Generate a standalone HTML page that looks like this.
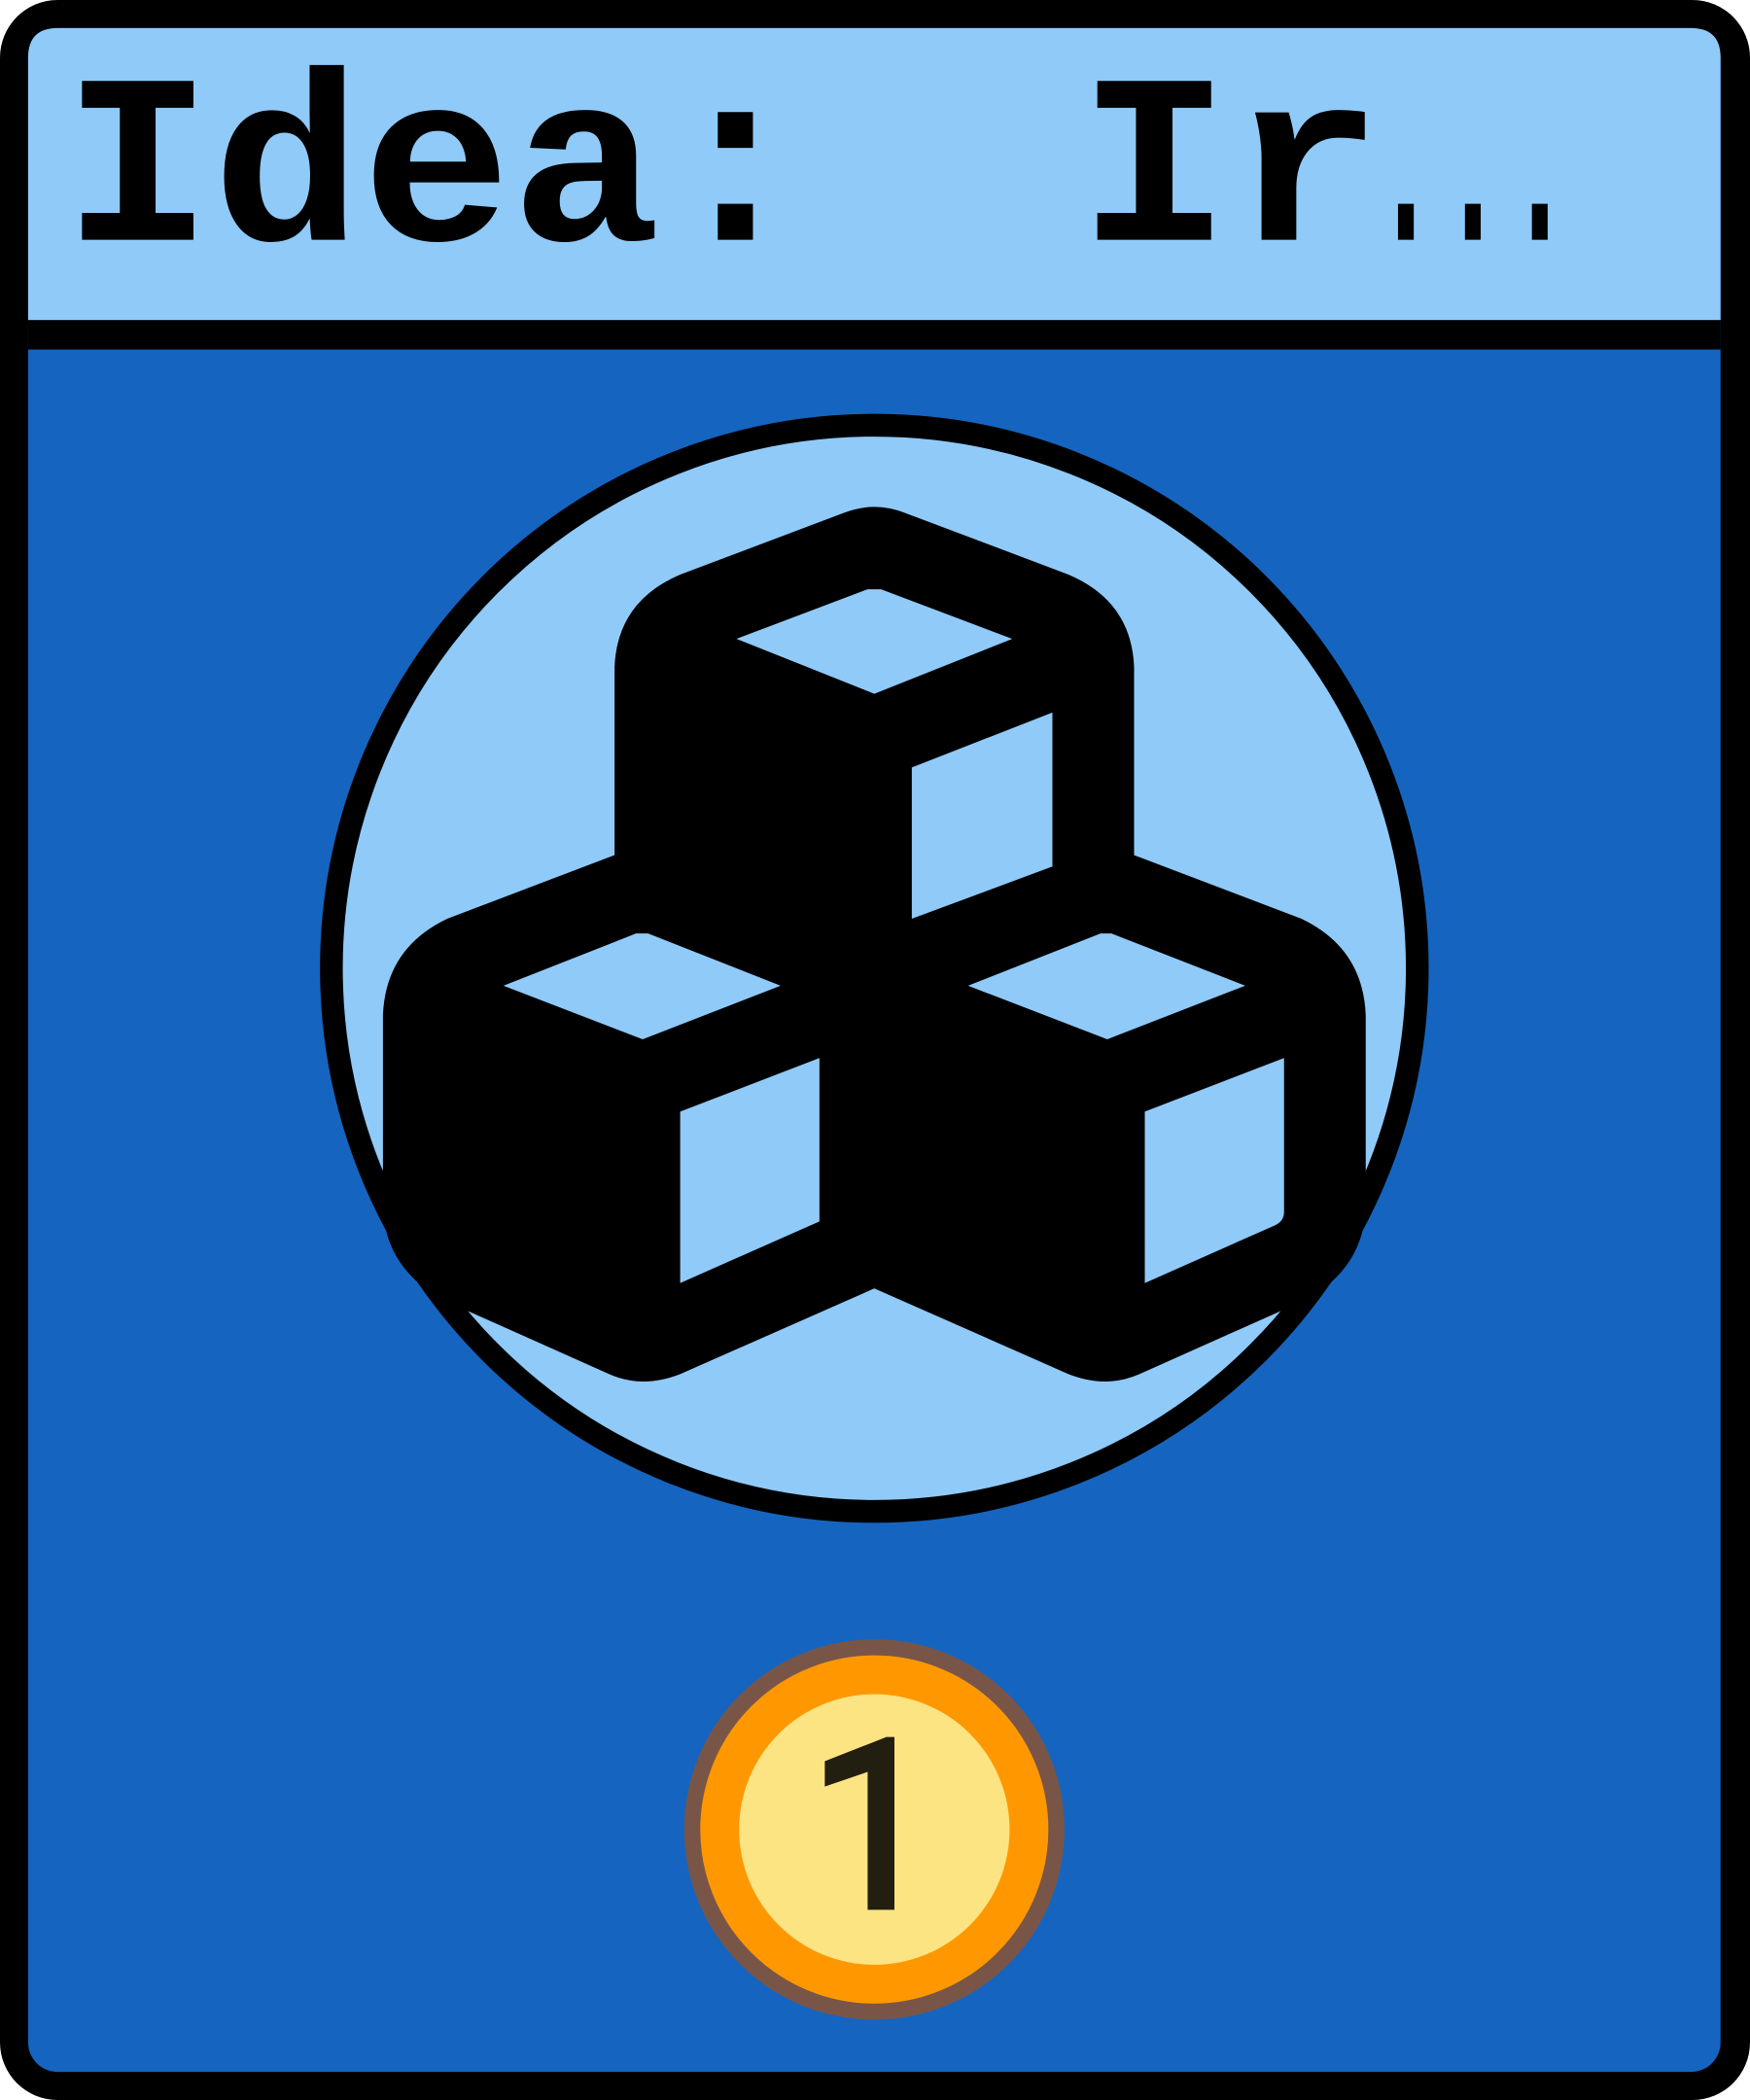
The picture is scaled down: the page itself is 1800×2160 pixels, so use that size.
<!DOCTYPE html>
<html><head><meta charset="utf-8"><style>
html,body{margin:0;padding:0;width:1800px;height:2160px;overflow:hidden;background:#fff}
svg{display:block}
</style></head><body>
<svg width="1800" height="2160" viewBox="0 0 1307 1568" preserveAspectRatio="none" xmlns="http://www.w3.org/2000/svg">
<rect x="0" y="0" width="1307" height="1568" rx="43" fill="#000"/>
<rect x="21" y="21" width="1264" height="1526" rx="22" fill="#1565C0"/>
<path d="M21,239 V43 Q21,21 43,21 H1263 Q1285,21 1285,43 V239 Z" fill="#90CAF9"/>
<rect x="21" y="239" width="1264" height="22" fill="#000"/>
<g font-family="'Liberation Mono',monospace" font-weight="bold" font-size="180" fill="#000">
<text x="47" y="179" textLength="558" lengthAdjust="spacingAndGlyphs">Idea:</text>
<text x="805" y="179" textLength="228" lengthAdjust="spacingAndGlyphs">Ir</text>
<text x="1025" y="179" textLength="150" lengthAdjust="spacingAndGlyphs">...</text>
</g>
<circle cx="653" cy="723" r="405.5" fill="#90CAF9" stroke="#000" stroke-width="17"/>
<path d="M459,700 V498 Q461,449 508,429 L630,383 Q653,374 676,383 L798,429 Q845,449 847,498 V700 Z" fill="#000"/>
<path d="M286,758 Q288,708 334,686 L455,640 Q480,630 505,640 L653,700 L653,962 L508,1026 Q480,1037 455,1026 L334,972 Q290,950 286,905 Z" fill="#000"/>
<path d="M286,758 Q288,708 334,686 L455,640 Q480,630 505,640 L653,700 L653,962 L508,1026 Q480,1037 455,1026 L334,972 Q290,950 286,905 Z" fill="#000" transform="translate(1306,0) scale(-1,1)"/>
<rect x="640" y="680" width="26" height="280" fill="#000"/>
<g fill="#90CAF9">
<polygon points="550,477 648,440 658,440 756,477 653,518"/>
<polygon points="681,573 786,532 786,647 681,686"/>
<polygon points="376,736 475,697 484,697 583,736 480,776"/>
<polygon points="508,830 612,790 612,912 508,958"/>
<polygon points="723,736 822,697 830,697 930,736 827,776"/>
<path d="M855,830 L959,790 L959,905 Q959,912 952,915 L855,958 Z"/>
</g>
<circle cx="653" cy="1366" r="136" fill="#FF9800" stroke="#795548" stroke-width="12"/>
<circle cx="653" cy="1366" r="101" fill="#FDE483"/>
<path d="M616,1315 L662,1297 L668,1297 L668,1426 L648,1426 L648,1323 L616,1334 Z" fill="#221f10"/>
</svg>
</body></html>
